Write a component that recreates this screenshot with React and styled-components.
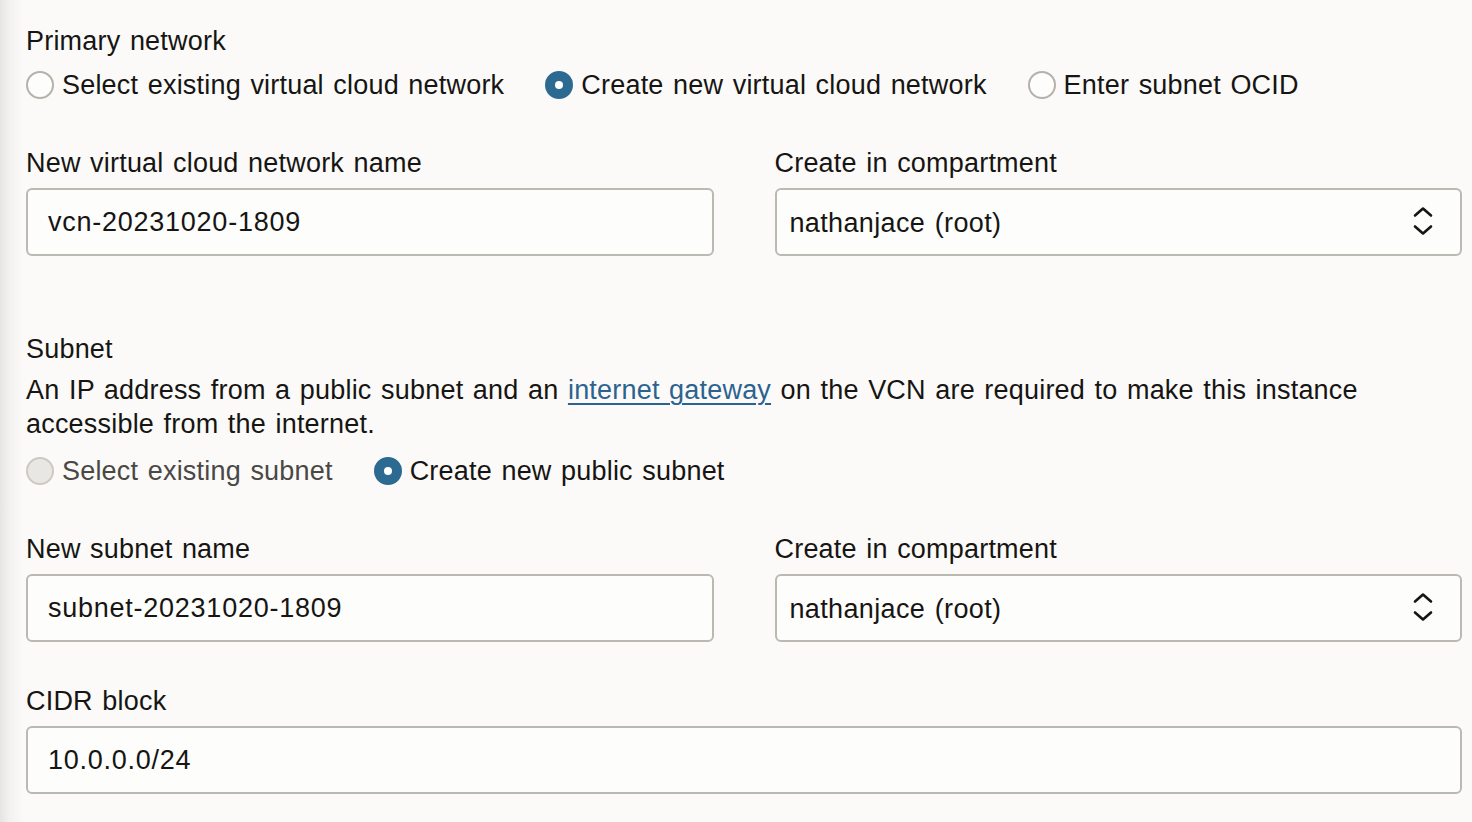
import React from "react";
import styled, { createGlobalStyle } from "styled-components";

const GlobalStyle = createGlobalStyle`
  html, body {
    margin: 0;
    padding: 0;
  }
  body {
    background: linear-gradient(to right, #e6e5e3 0px, #f3f2f0 10px, #fbfaf8 24px) #fbfaf8;
    font-family: "Liberation Sans", Arial, Helvetica, sans-serif;
    color: #161513;
    -webkit-font-smoothing: antialiased;
  }
`;

function Chevrons() {
  return (
    <svg width="22" height="30" viewBox="0 0 22 30" fill="none">
      <path d="M3 9.5 L11 2.5 L19 9.5" stroke="#161513" strokeWidth="2.6" strokeLinecap="round" strokeLinejoin="round" />
      <path d="M3 20.5 L11 27.5 L19 20.5" stroke="#161513" strokeWidth="2.6" strokeLinecap="round" strokeLinejoin="round" />
    </svg>
  );
}

function RadioOption({ checked, disabled, children }) {
  return (
    <Option $disabled={disabled}>
      <Circle $checked={checked} $disabled={disabled} />
      {children}
    </Option>
  );
}

function App() {
  return (
    <>
      <GlobalStyle />
      <Page>
        <Label>Primary network</Label>
        <RadioRow>
          <RadioOption>Select existing virtual cloud network</RadioOption>
          <RadioOption checked>Create new virtual cloud network</RadioOption>
          <RadioOption>Enter subnet OCID</RadioOption>
        </RadioRow>

        <FieldGrid>
          <Field>
            <Label>New virtual cloud network name</Label>
            <Input>vcn-20231020-1809</Input>
          </Field>
          <Field>
            <Label>Create in compartment</Label>
            <Select>
              nathanjace (root)
              <Chevrons />
            </Select>
          </Field>
        </FieldGrid>

        <Section>
          <Label>Subnet</Label>
          <Help>
            An IP address from a public subnet and an <Link href="#">internet gateway</Link> on the VCN are
            required to make this instance accessible from the internet.
          </Help>
          <RadioRow $top={13}>
            <RadioOption disabled>Select existing subnet</RadioOption>
            <RadioOption checked>Create new public subnet</RadioOption>
          </RadioRow>
        </Section>

        <FieldGrid>
          <Field>
            <Label>New subnet name</Label>
            <Input>subnet-20231020-1809</Input>
          </Field>
          <Field>
            <Label>Create in compartment</Label>
            <Select>
              nathanjace (root)
              <Chevrons />
            </Select>
          </Field>
        </FieldGrid>

        <Field $top={42}>
          <Label>CIDR block</Label>
          <Input>10.0.0.0/24</Input>
        </Field>
      </Page>
    </>
  );
}

const Page = styled.div`
  display: flex;
  flex-direction: column;
  padding: 24px 10px 30px 26px;
  font-size: 27px;
  letter-spacing: 0.2px;
  word-spacing: 1.8px;
`;

const Label = styled.div`
  line-height: 34px;
  color: #161513;
`;

const RadioRow = styled.div`
  display: flex;
  align-items: center;
  gap: 41px;
  margin-top: ${(p) => (p.$top ? p.$top : 10)}px;
`;

const Option = styled.label`
  display: flex;
  align-items: center;
  gap: 8px;
  line-height: 34px;
  color: ${(p) => (p.$disabled ? "#4a4845" : "#161513")};
`;

const Circle = styled.span`
  box-sizing: border-box;
  width: 28px;
  height: 28px;
  border-radius: 50%;
  flex: none;
  position: relative;
  border: 2px solid
    ${(p) => (p.$checked ? "#2c6a91" : p.$disabled ? "#cdcac5" : "#b5b1ab")};
  background: ${(p) => (p.$checked ? "#2c6a91" : p.$disabled ? "#e9e7e3" : "#fdfdfc")};

  &::after {
    content: "";
    display: ${(p) => (p.$checked ? "block" : "none")};
    position: absolute;
    left: 50%;
    top: 50%;
    width: 8px;
    height: 8px;
    margin: -4px 0 0 -4px;
    border-radius: 50%;
    background: #ffffff;
  }
`;

const FieldGrid = styled.div`
  display: grid;
  grid-template-columns: 1fr 1fr;
  column-gap: 61px;
  margin-top: 44px;
`;

const Field = styled.div`
  display: flex;
  flex-direction: column;
  gap: 8px;
  margin-top: ${(p) => (p.$top ? p.$top : 0)}px;
`;

const Input = styled.div`
  box-sizing: border-box;
  height: 68px;
  display: flex;
  align-items: center;
  padding: 0 20px;
  border: 2px solid #bcb8b2;
  border-radius: 6px;
  background: #fdfdfc;
  color: #161513;
  letter-spacing: 0.75px;
`;

const Select = styled(Input)`
  justify-content: space-between;
  padding: 2px 26px 0 13px;
  letter-spacing: 0.35px;

  svg {
    margin-top: -4px;
  }
`;

const Section = styled.div`
  display: flex;
  flex-direction: column;
  margin-top: 76px;
`;

const Help = styled.p`
  margin: 7px 0 0;
  line-height: 34px;
  max-width: 1400px;
`;

const Link = styled.a`
  color: #2b6390;
  text-decoration: underline;
  text-underline-offset: 4px;
  text-decoration-thickness: 2px;
`;

export default App;
